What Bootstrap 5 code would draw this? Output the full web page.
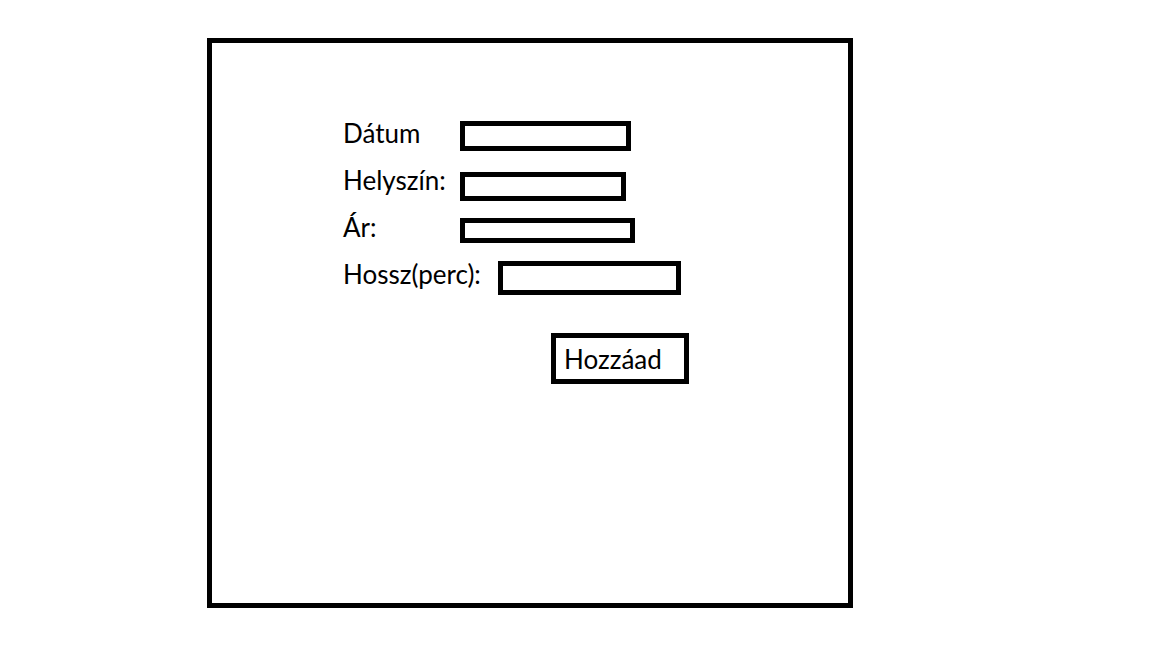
<!DOCTYPE html>
<html lang="hu">
<head>
<meta charset="utf-8">
<meta name="viewport" content="width=device-width, initial-scale=1">
<title>Hozzáad</title>
<link href="https://cdn.jsdelivr.net/npm/bootstrap@5.3.0/dist/css/bootstrap.min.css" rel="stylesheet">
<style>
  body { font-family: Lato, "Open Sans", sans-serif; font-size: 26px; line-height: 30px; color: #000; background: #fff; }
  .page { padding: 38px 299px 40px 207px; }
  .outlined { border: 5px solid #000; border-radius: 0; background: #fff; color: #000; }
  .entry-form { padding: 75px 131px; }
  .fields { gap: 11px; }
  .field { gap: 13px; height: 36px; }
  .field label { min-width: 104px; white-space: nowrap; }
  .field .label-wide { min-width: 142px; }
  .field input { padding: 0 4px; font-size: 14px; line-height: 14px; }
  .field-date { width: 171px; height: 30px; }
  .field-place { width: 166px; height: 29px; }
  .field-price { width: 175px; height: 25px; }
  .field-length { width: 183px; height: 34px; }
  .add-button { width: 138px; height: 51px; margin: 38px 0 0 208px; padding: 0 8px; text-align: left; }
</style>
</head>
<body>
<main class="page d-flex flex-column min-vh-100">
  <form class="entry-form outlined flex-grow-1">
    <div class="fields d-flex flex-column">
      <div class="field d-flex">
        <label for="datum">Dátum</label>
        <input id="datum" type="text" class="outlined field-date align-self-center">
      </div>
      <div class="field d-flex">
        <label for="helyszin">Helyszín:</label>
        <input id="helyszin" type="text" class="outlined field-place align-self-end">
      </div>
      <div class="field d-flex">
        <label for="ar">Ár:</label>
        <input id="ar" type="text" class="outlined field-price align-self-center">
      </div>
      <div class="field d-flex">
        <label for="hossz" class="label-wide">Hossz(perc):</label>
        <input id="hossz" type="text" class="outlined field-length align-self-end">
      </div>
    </div>
    <button type="button" class="outlined add-button">Hozzáad</button>
  </form>
</main>
<script src="https://cdn.jsdelivr.net/npm/bootstrap@5.3.0/dist/js/bootstrap.bundle.min.js"></script>
</body>
</html>
